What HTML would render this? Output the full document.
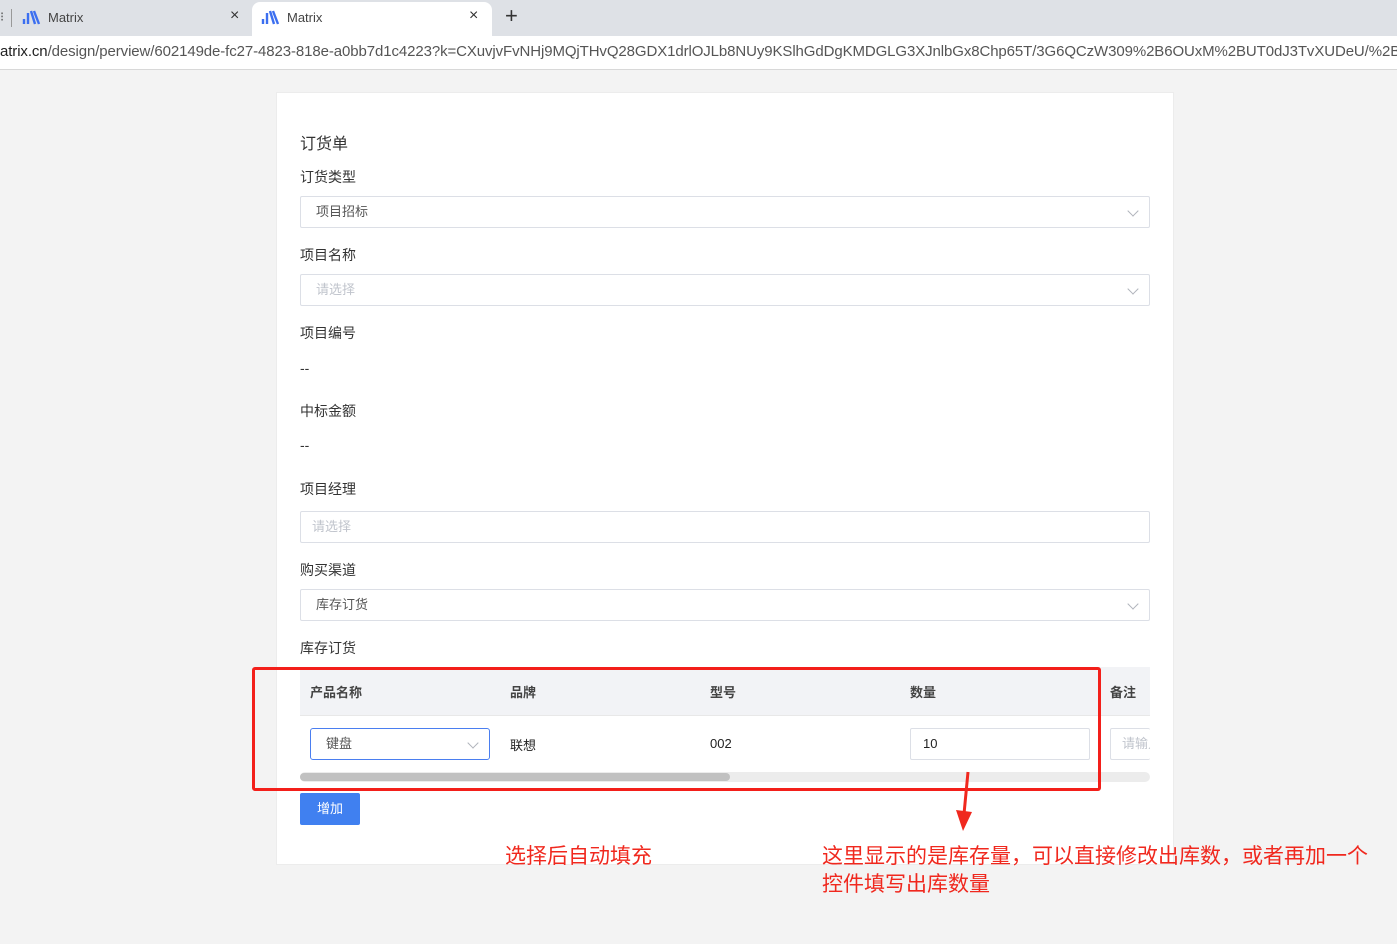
<!DOCTYPE html>
<html><head><meta charset="utf-8"><style>
*{box-sizing:border-box;margin:0;padding:0}
body{width:1397px;height:944px;position:relative;overflow:hidden;background:#f3f3f3;font-family:"Liberation Sans","Noto Sans CJK SC",sans-serif;font-size:13px;color:#333}
.a{position:absolute}
.tabbar{left:0;top:0;width:1397px;height:36px;background:#dee1e6}
.addr{left:0;top:36px;width:1397px;height:34px;background:#fff;border-bottom:1px solid #d8d8d8}
.card{left:276px;top:92px;width:898px;height:773px;background:#fff;border:1px solid #ececec}
.lbl{font-size:14px;color:#333}
.inp{height:32px;border:1px solid #dcdfe6;border-radius:2px;background:#fff;padding-left:15px;line-height:30px;font-size:13px;color:#555}
.ph{color:#c0c4cc}
.chev{position:absolute;right:12px;top:10px;width:8px;height:8px;border-right:1px solid #b0b4bc;border-bottom:1px solid #b0b4bc;transform:rotate(45deg)}
.red{color:#f0281e;font-size:21px}
</style></head><body>
<div class="a tabbar"></div>
<div class="a" style="left:0;top:9px;font-size:13px;color:#555">⁝</div>
<div class="a" style="left:11px;top:9px;width:1px;height:18px;background:#999"></div>
<svg class="a" style="left:22px;top:9px" width="20" height="16"><path d="M2 10v5M6 4v11M9 2l4 13M12 2l5 13" stroke="#3c6ff0" stroke-width="2.4" fill="none"/></svg>
<div class="a" style="left:48px;top:10px;color:#444">Matrix</div>
<div class="a" style="left:230px;top:7px;font-size:16px;color:#333">×</div>
<div class="a" style="left:252px;top:2px;width:240px;height:34px;background:#fff;border-radius:8px 8px 0 0"></div>
<svg class="a" style="left:261px;top:9px" width="20" height="16"><path d="M2 10v5M6 4v11M9 2l4 13M12 2l5 13" stroke="#3c6ff0" stroke-width="2.4" fill="none"/></svg>
<div class="a" style="left:287px;top:10px;color:#444">Matrix</div>
<div class="a" style="left:469px;top:7px;font-size:16px;color:#333">×</div>
<div class="a" style="left:505px;top:3px;font-size:22px;color:#333">+</div>
<div class="a addr"></div>
<div class="a" style="left:0;top:43px;font-size:15px;color:#555;white-space:nowrap;letter-spacing:-0.1px"><span style="color:#222">atrix.cn</span>/design/perview/602149de-fc27-4823-818e-a0bb7d1c4223?k=CXuvjvFvNHj9MQjTHvQ28GDX1drlOJLb8NUy9KSlhGdDgKMDGLG3XJnlbGx8Chp65T/3G6QCzW309%2B6OUxM%2BUT0dJ3TvXUDeU/%2By</div>
<div class="a card"></div>
<div class="a" style="left:300px;top:130px;font-size:16px">订货单</div>
<div class="a lbl" style="left:300px;top:167px">订货类型</div>
<div class="a inp" style="left:300px;top:196px;width:850px">项目招标<i class="chev"></i></div>
<div class="a lbl" style="left:300px;top:245px">项目名称</div>
<div class="a inp ph" style="left:300px;top:274px;width:850px">请选择<i class="chev"></i></div>
<div class="a lbl" style="left:300px;top:323px">项目编号</div>
<div class="a lbl" style="left:300px;top:360px">--</div>
<div class="a lbl" style="left:300px;top:401px">中标金额</div>
<div class="a lbl" style="left:300px;top:437px">--</div>
<div class="a lbl" style="left:300px;top:479px">项目经理</div>
<div class="a inp ph" style="left:300px;top:511px;width:850px;padding-left:11px">请选择</div>
<div class="a lbl" style="left:300px;top:560px">购买渠道</div>
<div class="a inp" style="left:300px;top:589px;width:850px">库存订货<i class="chev"></i></div>
<div class="a lbl" style="left:300px;top:638px">库存订货</div>
<div class="a" style="left:300px;top:667px;width:850px;height:49px;background:#f2f3f6;border-bottom:1px solid #e8e8e8"></div>
<div class="a" style="left:310px;top:682px;font-weight:bold;color:#444">产品名称</div>
<div class="a" style="left:510px;top:682px;font-weight:bold;color:#444">品牌</div>
<div class="a" style="left:710px;top:682px;font-weight:bold;color:#444">型号</div>
<div class="a" style="left:910px;top:682px;font-weight:bold;color:#444">数量</div>
<div class="a" style="left:1110px;top:682px;font-weight:bold;color:#444">备注</div>
<div class="a inp" style="left:310px;top:728px;width:180px;border-color:#4a7ef0;border-radius:3px">键盘<i class="chev"></i></div>
<div class="a" style="left:510px;top:735px;color:#222">联想</div>
<div class="a" style="left:710px;top:736px;color:#222">002</div>
<div class="a inp" style="left:910px;top:728px;width:180px;color:#222;padding-left:12px">10</div>
<div class="a inp ph" style="left:1110px;top:728px;width:40px;border-right:none;padding-left:11px;overflow:hidden;white-space:nowrap">请输入</div>
<div class="a" style="left:300px;top:772px;width:850px;height:10px;background:#ececec;border-radius:5px"></div>
<div class="a" style="left:300px;top:773px;width:430px;height:8px;background:#c1c1c1;border-radius:4px"></div>
<div class="a" style="left:252px;top:667px;width:849px;height:124px;border:3px solid #f31f1a;border-radius:3px"></div>
<div class="a" style="left:300px;top:793px;width:60px;height:32px;background:#4080f0;border-radius:2px;color:#fff;text-align:center;line-height:32px">增加</div>
<svg class="a" style="left:950px;top:770px" width="30" height="62"><path d="M18 2L14 44" stroke="#f0281e" stroke-width="3"/><path d="M6 40L13 61L22 42Z" fill="#f0281e"/></svg>
<div class="a red" style="left:505px;top:840px">选择后自动填充</div>
<div class="a red" style="left:822px;top:843px;line-height:28px">这里显示的是库存量，可以直接修改出库数，或者再加一个<br>控件填写出库数量</div>
</body></html>
